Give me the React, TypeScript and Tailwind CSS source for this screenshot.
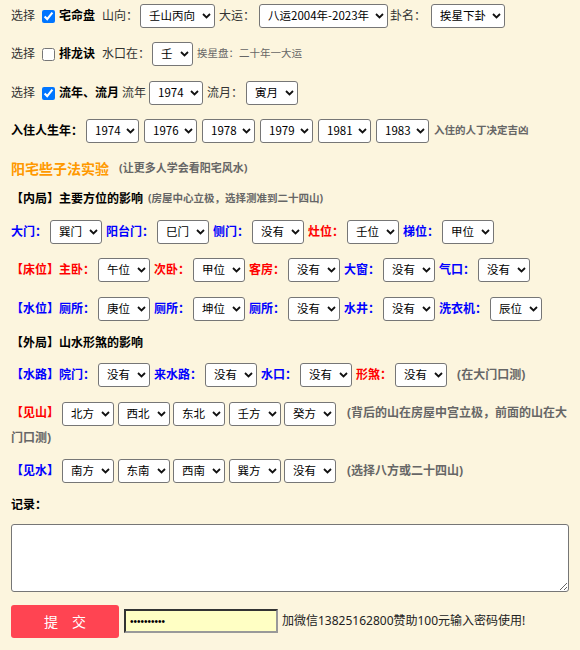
import React from "react";

const blue = "font-bold text-[#0000ff]";
const red = "font-bold text-[#ff0000]";
const note = "font-bold text-[#666]";

function Sel({ value, className = "" }: { value: string; className?: string }) {
  return (
    <span className={`relative inline-flex h-[24px] shrink-0 align-middle ${className}`}>
      <select
        defaultValue={value}
        className="h-full w-full appearance-none rounded-[3px] border border-[#767676] bg-white pl-[8px] pr-[14px] font-['Noto_Sans_CJK_SC',sans-serif] text-[11.5px] leading-none text-black outline-none"
      >
        <option>{value}</option>
      </select>
      <svg
        className="pointer-events-none absolute right-[4px] top-[9px]"
        width="9"
        height="6"
        viewBox="0 0 9 6"
      >
        <path d="M1 1l3.5 3.5L8 1" fill="none" stroke="#111" strokeWidth="1.8" />
      </svg>
    </span>
  );
}

export default function App() {
  return (
    <div className="min-h-screen bg-[#fcf5de] px-[11px] pt-[4px] font-['Noto_Sans','Noto_Sans_CJK_SC',sans-serif] text-[12px] text-[#333]">
      {/* 宅命盘 */}
      <div className="flex h-[24px] items-center">
        <span>选择</span>
        <input type="checkbox" defaultChecked className="ml-[7px] h-[13px] w-[13px] accent-[#0075ff]" />
        <b className="ml-[4px] text-black">宅命盘</b>
        <span className="ml-[7px]">山向：</span>
        <Sel value="壬山丙向" className="ml-[2px] w-[75px]" />
        <span className="ml-[4px]">大运：</span>
        <Sel value="八运2004年-2023年" className="ml-[4px] w-[129px]" />
        <span className="ml-[2px]">卦名：</span>
        <Sel value="挨星下卦" className="ml-[5px] w-[74px]" />
      </div>

      {/* 排龙诀 */}
      <div className="mt-[14px] flex h-[24px] items-center">
        <span>选择</span>
        <input type="checkbox" className="ml-[7px] h-[13px] w-[13px]" />
        <b className="ml-[4px] text-black">排龙诀</b>
        <span className="ml-[7px]">水口在：</span>
        <Sel value="壬" className="ml-[2px] w-[41px]" />
        <span className="ml-[4px] text-[10.5px] text-[#666]">挨星盘：二十年一大运</span>
      </div>

      {/* 流年 */}
      <div className="mt-[15px] flex h-[24px] items-center">
        <span>选择</span>
        <input type="checkbox" defaultChecked className="ml-[7px] h-[13px] w-[13px] accent-[#0075ff]" />
        <b className="ml-[4px] text-black">流年、流月</b>
        <span className="ml-[3px]">流年</span>
        <Sel value="1974" className="ml-[3px] w-[54px]" />
        <span className="ml-[4px]">流月：</span>
        <Sel value="寅月" className="ml-[3px] w-[52px]" />
      </div>

      {/* 入住人生年 */}
      <div className="mt-[14px] flex h-[24px] items-center gap-[5px]">
        <b className="mr-[-2px] text-black">入住人生年：</b>
        {["1974", "1976", "1978", "1979", "1981", "1983"].map((y) => (
          <Sel key={y} value={y} className="w-[53px]" />
        ))}
        <span className={`text-[10.5px] ${note}`}>入住的人丁决定吉凶</span>
      </div>

      {/* heading */}
      <div className="mt-[15px] flex h-[20px] items-center">
        <span className="text-[14px] font-bold text-[#ff9900]">阳宅些子法实验</span>
        <span className={`ml-[10px] text-[11px] ${note}`}>(让更多人学会看阳宅风水)</span>
      </div>

      <div className="mt-[11px] flex h-[20px] items-center">
        <b className="text-black">【内局】主要方位的影响</b>
        <span className={`ml-[5px] text-[10.5px] ${note}`}>(房屋中心立极，选择测准到二十四山)</span>
      </div>

      {/* 门 */}
      <div className="mt-[11px] flex h-[24px] items-center gap-[3px]">
        <span className={blue}>大门：</span>
        <Sel value="巽门" className="w-[52px]" />
        <span className={`ml-[1px] ${blue}`}>阳台门：</span>
        <Sel value="巳门" className="w-[52px]" />
        <span className={`ml-[1px] ${blue}`}>侧门：</span>
        <Sel value="没有" className="w-[52px]" />
        <span className={`ml-[1px] ${red}`}>灶位：</span>
        <Sel value="壬位" className="w-[52px]" />
        <span className={`ml-[1px] ${blue}`}>梯位：</span>
        <Sel value="甲位" className="w-[52px]" />
      </div>

      {/* 床位 */}
      <div className="mt-[14px] flex h-[24px] items-center gap-[3px]">
        <span className={red}>【床位】主卧：</span>
        <Sel value="午位" className="w-[52px]" />
        <span className={`ml-[1px] ${red}`}>次卧：</span>
        <Sel value="甲位" className="w-[52px]" />
        <span className={`ml-[1px] ${red}`}>客房：</span>
        <Sel value="没有" className="w-[52px]" />
        <span className={`ml-[1px] ${blue}`}>大窗：</span>
        <Sel value="没有" className="w-[52px]" />
        <span className={`ml-[1px] ${blue}`}>气口：</span>
        <Sel value="没有" className="w-[52px]" />
      </div>

      {/* 水位 */}
      <div className="mt-[15px] flex h-[24px] items-center gap-[3px]">
        <span className={blue}>【水位】厕所：</span>
        <Sel value="庚位" className="w-[52px]" />
        <span className={`ml-[1px] ${blue}`}>厕所：</span>
        <Sel value="坤位" className="w-[52px]" />
        <span className={`ml-[1px] ${blue}`}>厕所：</span>
        <Sel value="没有" className="w-[52px]" />
        <span className={`ml-[1px] ${blue}`}>水井：</span>
        <Sel value="没有" className="w-[52px]" />
        <span className={`ml-[1px] ${blue}`}>洗衣机：</span>
        <Sel value="辰位" className="w-[52px]" />
      </div>

      <div className="mt-[12px] flex h-[20px] items-center">
        <b className="text-black">【外局】山水形煞的影响</b>
      </div>

      {/* 水路 */}
      <div className="mt-[10px] flex h-[24px] items-center gap-[3px]">
        <span className={blue}>【水路】院门：</span>
        <Sel value="没有" className="w-[52px]" />
        <span className={`ml-[1px] ${blue}`}>来水路：</span>
        <Sel value="没有" className="w-[52px]" />
        <span className={`ml-[1px] ${blue}`}>水口：</span>
        <Sel value="没有" className="w-[52px]" />
        <span className={`ml-[1px] ${red}`}>形煞：</span>
        <Sel value="没有" className="w-[52px]" />
        <span className={`ml-[7px] ${note}`}>(在大门口测)</span>
      </div>

      {/* 见山 */}
      <div className="mt-[14px] leading-[23px]">
        <span className={red}>【见山】</span>
        <Sel value="北方" className="ml-[3px] w-[52px]" />
        <Sel value="西北" className="ml-[3.5px] w-[52px]" />
        <Sel value="东北" className="ml-[3.5px] w-[52px]" />
        <Sel value="壬方" className="ml-[3.5px] w-[52px]" />
        <Sel value="癸方" className="ml-[3.5px] w-[52px]" />
        <span className={`ml-[11px] ${note}`}>(背后的山在房屋中宫立极，前面的山在大门口测)</span>
      </div>

      {/* 见水 */}
      <div className="mt-[10px] flex h-[24px] items-center">
        <span className={blue}>【见水】</span>
        <Sel value="南方" className="ml-[3px] w-[52px]" />
        <Sel value="东南" className="ml-[3.5px] w-[52px]" />
        <Sel value="西南" className="ml-[3.5px] w-[52px]" />
        <Sel value="巽方" className="ml-[3.5px] w-[52px]" />
        <Sel value="没有" className="ml-[3.5px] w-[52px]" />
        <span className={`ml-[11px] ${note}`}>(选择八方或二十四山)</span>
      </div>

      <div className="mt-[12px] flex h-[20px] items-center">
        <b className="text-black">记录：</b>
      </div>

      <textarea className="mt-[9px] block h-[68px] w-full rounded-[3px] border border-[#767676] bg-white" />

      <div className="mt-[13px] flex items-center">
        <button className="flex h-[33px] w-[108px] items-center justify-center gap-[14px] rounded-[3px] bg-[#ff4452] text-[14px] text-white">
          <span>提</span>
          <span>交</span>
        </button>
        <input
          type="password"
          defaultValue="1234567890"
          className="ml-[5px] h-[24px] w-[154px] border-2 border-t-[#333] border-r-[#999] border-b-[#999] border-l-[#333] bg-[#ffffc4] px-[4px] font-['Liberation_Sans',sans-serif] text-[10px] text-black outline-none"
        />
        <span className="ml-[4px] text-[#222]">加微信13825162800赞助100元输入密码使用!</span>
      </div>
    </div>
  );
}
